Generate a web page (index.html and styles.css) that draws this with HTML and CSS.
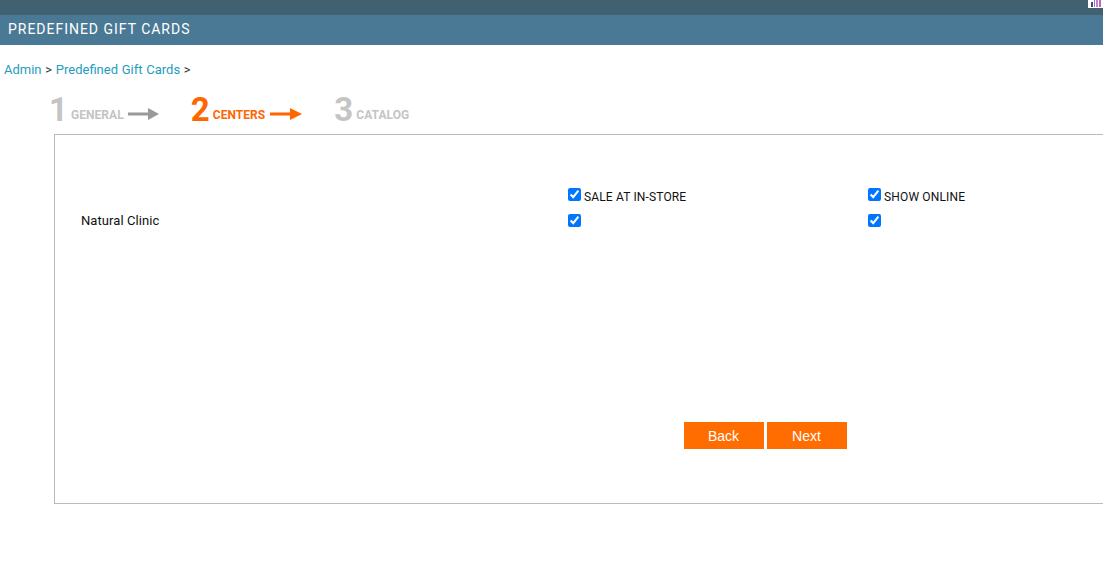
FILE: index.html
```html
<!DOCTYPE html>
<html lang="en">
<head>
<meta charset="utf-8">
<title>Predefined Gift Cards</title>
<link rel="stylesheet" href="styles.css">
</head>
<body>
<div class="topbar">
  <svg class="topicon" width="15" height="8" viewBox="0 0 15 8"><rect width="15" height="8" fill="#fff"/><rect x="3" y="2" width="2" height="5" fill="#3a4a9a"/><rect x="6" y="0" width="1" height="7" fill="#b06ac0"/><rect x="8" y="0" width="2" height="7" fill="#c080d0"/><rect x="11" y="0" width="2" height="7" fill="#b06ac0"/></svg>
</div>
<h1 class="titlebar">PREDEFINED GIFT CARDS</h1>
<nav class="crumbs"><a>Admin</a> &gt; <a>Predefined Gift Cards</a> &gt;</nav>
<div class="steps">
  <div class="step done"><span class="num">1</span><span class="lbl">GENERAL</span>
    <svg class="arrow" width="32" height="14" viewBox="0 0 32 14"><path d="M0 5.5h20V1l11 6-11 6V8.5H0z" fill="currentColor"/></svg></div>
  <div class="step active"><span class="num">2</span><span class="lbl">CENTERS</span>
    <svg class="arrow" width="32" height="14" viewBox="0 0 32 14"><path d="M0 5.5h20V1l12 6-12 6V8.5H0z" fill="currentColor"/></svg></div>
  <div class="step"><span class="num">3</span><span class="lbl">CATALOG</span></div>
</div>
<main class="panel">
  <div class="grid">
    <div></div>
    <label class="cell"><input type="checkbox" checked><span class="txt">SALE AT IN-STORE</span></label>
    <label class="cell"><input type="checkbox" checked><span class="txt">SHOW ONLINE</span></label>
    <div class="name">Natural Clinic</div>
    <label class="cell"><input type="checkbox" checked></label>
    <label class="cell"><input type="checkbox" checked></label>
  </div>
  <div class="actions">
    <button class="btn" type="button">Back</button>
    <button class="btn" type="button">Next</button>
  </div>
</main>
</body>
</html>
```
FILE: styles.css
```css
html, body { margin: 0; padding: 0; background: #fff; overflow: hidden; }
body { width: 1103px; height: 572px; font-family: Roboto, "Liberation Sans", sans-serif; font-size: 13px; color: #222; }
.topbar { height: 15px; background: #426170; display: flex; justify-content: flex-end; align-items: flex-start; }
.topicon { display: block; }
.titlebar { margin: 0; height: 30px; line-height: 29px; padding-left: 8px; background: #4a7995; color: #fff; font-size: 14px; font-weight: 400; letter-spacing: 0.98px; }
.crumbs { padding: 16px 0 0 4px; height: 17px; line-height: 17px; color: #333; font-size: 13px; word-spacing: 0.5px; }
.crumbs a { color: #1f9dbb; }
.steps { display: flex; margin: 15px 0 0 49px; height: 34px; align-items: center; }
.step { display: flex; align-items: center; color: #c4c4c4; }
.step.active { margin-left: 31px; color: #ff6600; }
.step.active + .step { margin-left: 32px; }
.step .num { font-size: 33px; font-weight: 700; line-height: 34px; width: 22px; }
.step .lbl { font-size: 12px; font-weight: 700; letter-spacing: 0.05px; margin-top: 10px; }
.step .arrow { margin: 8px 0 0 4px; }
.step.active .arrow { margin-left: 5px; }
.step.done .arrow { color: #999; }
.panel { margin-left: 54px; margin-top: 7px; height: 368px; border: 1px solid #bbb; border-right: 0; }
.grid { display: grid; grid-template-columns: 513px 300px 1fr; padding-top: 46px; grid-auto-rows: 26px; align-items: center; }
.name { padding-left: 26px; color: #111; font-size: 13px; letter-spacing: 0.08px; }
.cell { display: flex; align-items: center; height: 26px; color: #111; font-size: 12px; }
.cell input { margin: 0 3px 0 0; width: 13px; height: 13px; }
.txt { letter-spacing: 0.15px; margin-top: 6px; }
.actions { display: flex; gap: 3px; margin: 189px 0 0 629px; }
.btn { width: 80px; height: 27px; border: 0; padding: 0 1px 0 0; background: #ff6c00; color: #fff; font-family: "Liberation Sans", sans-serif; font-size: 14px; }
```
